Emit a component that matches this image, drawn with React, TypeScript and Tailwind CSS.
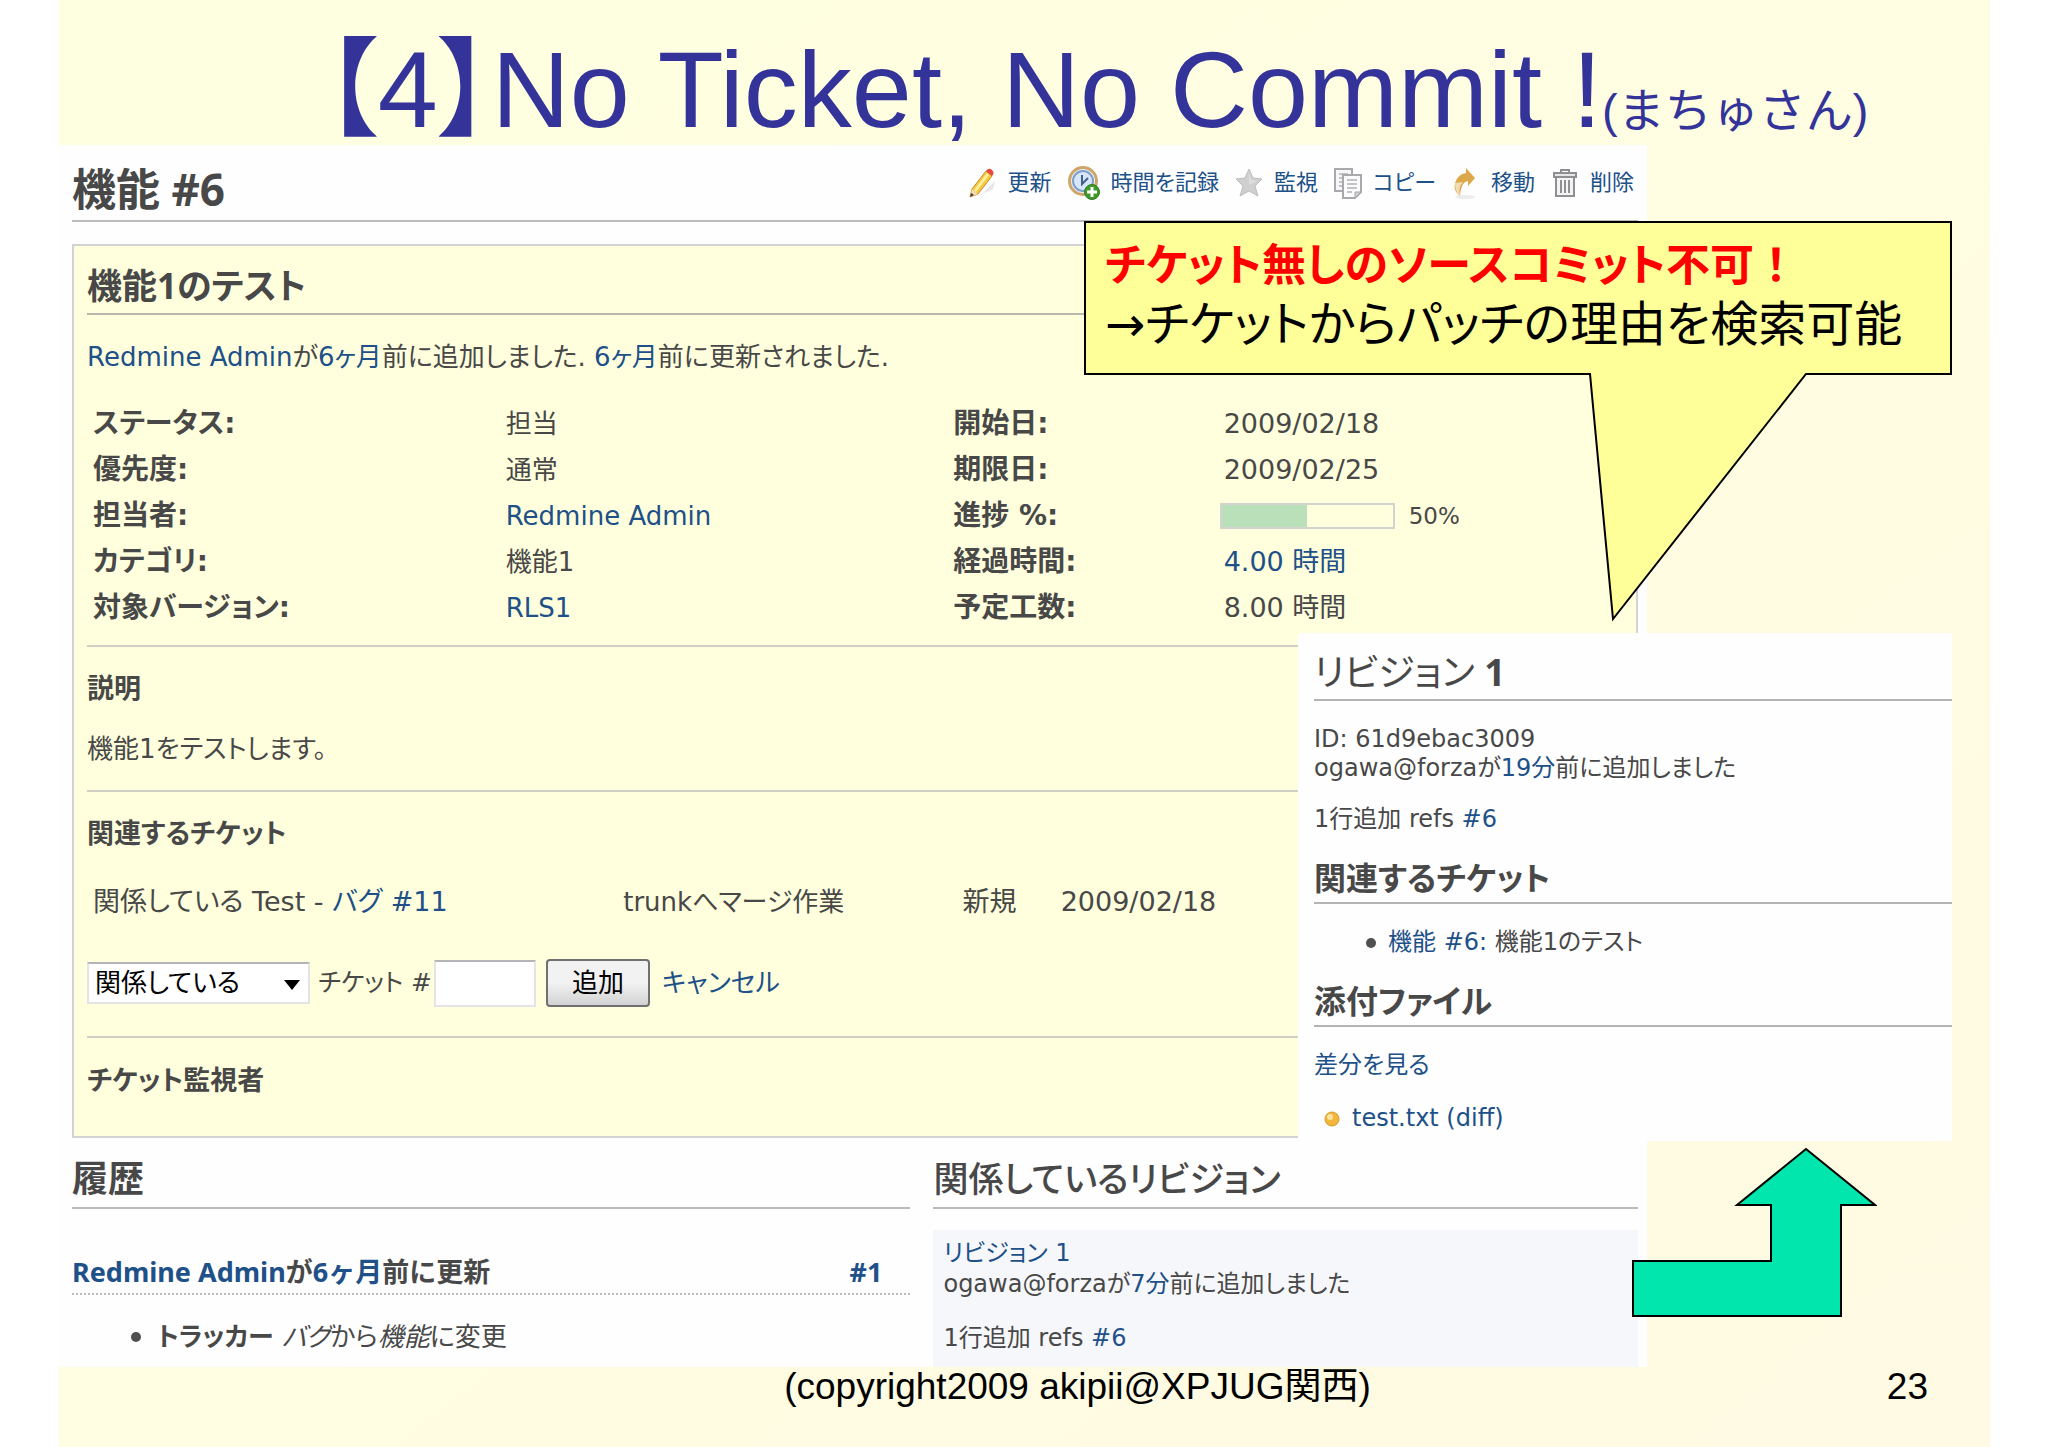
import { useState } from "react";
import type { ReactNode } from "react";

type LinkProps = {
    children: ReactNode;
}

const Link = ({ children }: LinkProps) => {
    return <a href="#" className="text-[#205088]">{children}</a>;
};

const PencilIcon = () => (
    <svg className="w-7 h-8 shrink-0" viewBox="0 0 28 32">
        <path d="M6 30 L24 22 L26 14 L12 28 Z" fill="#e6e6e6" />
        <path d="M1 30 L3 22 L17 4 L23 9 L9 27 Z" fill="#f7c93c" stroke="#d08a2a" strokeWidth="1" />
        <path d="M5 23 L18 6 L20 8 L7 25 Z" fill="#fdf0a0" />
        <path d="M17 4 Q20 0 23 3 Q26 6 23 9 Z" fill="#e8483c" />
        <path d="M1 30 L3 22 L9 27 Z" fill="#f1d9b0" />
        <path d="M1 30 L2 26 L5 28 Z" fill="#4a3a2a" />
    </svg>
);

const ClockIcon = () => (
    <svg className="w-8 h-9 shrink-0" viewBox="0 0 32 36">
        <circle cx="15" cy="16" r="13.5" fill="#e9eef6" stroke="#cfa66a" strokeWidth="3" />
        <circle cx="15" cy="16" r="10" fill="#d7e6f8" stroke="#7f9fcb" strokeWidth="2" />
        <path d="M14 10 V19 L20 13" fill="none" stroke="#3f5f8c" strokeWidth="2" />
        <circle cx="24" cy="27" r="7.5" fill="#3f9a2c" stroke="#2d7a1f" strokeWidth="1" />
        <path d="M24 22 V32 M19 27 H29" stroke="#fff" strokeWidth="3" />
    </svg>
);

const StarIcon = () => (
    <svg className="w-7 h-8 shrink-0" viewBox="0 0 28 32">
        <path d="M14 2 L18 11 L27 12 L20 19 L23 29 L14 24 L5 29 L8 19 L1 12 L10 11 Z" fill="#cfcfcf" stroke="#bdbdbd" strokeWidth="1" />
        <path d="M14 6 L16 13 L22 14 L14 18 Z" fill="#dedede" />
    </svg>
);

const CopyIcon = () => (
    <svg className="w-7 h-8 shrink-0" viewBox="0 0 28 32">
        <path d="M1 2 H18 V24 H1 Z" fill="#f7f7f7" stroke="#a9a9ad" strokeWidth="2" />
        <path d="M5 7 H14 M5 11 H8 M5 15 H8 M5 19 H8" stroke="#c3c3c7" strokeWidth="2" />
        <path d="M9 8 H27 V25 L21 31 H9 Z" fill="#fbfbfb" stroke="#a9a9ad" strokeWidth="2" />
        <path d="M13 13 H23 M13 17 H23 M13 21 H23 M13 25 H18" stroke="#c3c3c7" strokeWidth="2" />
        <path d="M27 25 H21 V31 Z" fill="#d0d0d4" stroke="#a9a9ad" strokeWidth="1" />
    </svg>
);

const MoveIcon = () => (
    <svg className="w-7 h-8 shrink-0" viewBox="0 0 28 32">
        <ellipse cx="13" cy="30" rx="10" ry="2" fill="#ececec" />
        <path d="M14 1 L23 11 L16 19 V14 Q9 15 8 29 Q1 24 3 16 Q6 7 14 6 Z" fill="#dda84a" />
        <path d="M3 16 Q3 25 8 29 Q6 20 11 15 Z" fill="#f0dcb0" />
    </svg>
);

const TrashIcon = () => (
    <svg className="w-7 h-8 shrink-0" viewBox="0 0 28 32" fill="none" stroke="#8f8f93" strokeWidth="2">
        <path d="M10 6 V3 H18 V6" />
        <path d="M3 6 H25 V10 H3 Z" fill="#e6e6e8" />
        <path d="M5 11 V29 H23 V11" fill="#f4f4f5" />
        <path d="M10 13 V26 M14 13 V26 M18 13 V26" />
    </svg>
);

const actions = [
    { label: '更新', icon: <PencilIcon /> },
    { label: '時間を記録', icon: <ClockIcon /> },
    { label: '監視', icon: <StarIcon /> },
    { label: 'コピー', icon: <CopyIcon /> },
    { label: '移動', icon: <MoveIcon /> },
    { label: '削除', icon: <TrashIcon /> },
];

const DoneRatio = ({ value }: { value: number }) => (
    <div className="flex items-center">
        <div className="-ml-1 w-[175px] h-[26px] border-2 border-[#d3d3d0]">
            <div className="h-full bg-[#bae0ba]" style={{ width: `${value}%` }}></div>
        </div>
        <span className="ml-3.5 text-[23px]">{value}%</span>
    </div>
);

const attributes: { label: string; value: ReactNode; label2: string; value2: ReactNode }[] = [
    { label: 'ステータス:', value: '担当', label2: '開始日:', value2: '2009/02/18' },
    { label: '優先度:', value: '通常', label2: '期限日:', value2: '2009/02/25' },
    { label: '担当者:', value: <Link>Redmine Admin</Link>, label2: '進捗 %:', value2: <DoneRatio value={50} /> },
    { label: 'カテゴリ:', value: '機能1', label2: '経過時間:', value2: <Link>4.00 時間</Link> },
    { label: '対象バージョン:', value: <Link>RLS1</Link>, label2: '予定工数:', value2: '8.00 時間' },
];

const RelationForm = () => {
    const [relation, setRelation] = useState('relates');
    const [ticket, setTicket] = useState('');

    return (
        <form className="mt-[39px] flex h-12 items-center" onSubmit={e => e.preventDefault()}>
            <div className="relative">
                <select aria-label="関係" className="block w-[223px] h-[42px] appearance-none border-2 border-[#e3e3e8] border-t-[#b4b4b8] bg-white pl-1.5 text-black" value={relation} onChange={e => setRelation(e.target.value)}>
                    <option value="relates">関係している</option>
                </select>
                <svg className="absolute right-2.5 top-[18px] w-4 h-2.5 pointer-events-none" viewBox="0 0 16 10">
                    <path d="M0 0 H16 L8 10 Z" fill="#000" />
                </svg>
            </div>
            <label className="ml-2 w-[116px] text-[25px] whitespace-nowrap" htmlFor="ticket">チケット #</label>
            <input id="ticket" type="text" className="w-[102px] h-[47px] border-2 border-[#e3e3e8] border-t-[#b4b4b8] bg-white px-2" value={ticket} onChange={e => setTicket(e.target.value)} />
            <button type="submit" className="ml-2.5 w-[104px] h-12 rounded border-2 border-[#707070] bg-linear-to-b from-[#f2f2f2] from-50% to-[#d2d2d2] text-black">追加</button>
            <span className="ml-3"><Link>キャンセル</Link></span>
        </form>
    );
};

const Issue = () => (
    <section className="mt-[22px] border-2 border-[#d3d3d3] bg-[#ffffdd] px-[13px] pb-[37px]">
        <h3 className="pt-[13px] border-b-2 border-[#b8b8ac] font-['Noto_Sans','Noto_Sans_CJK_JP',sans-serif] text-[35px] leading-[54px] font-bold">機能1のテスト</h3>
        <p className="mt-6 leading-9">
            <Link>Redmine Admin</Link>が<Link>6ヶ月</Link>前に追加しました. <Link>6ヶ月</Link>前に更新されました.
        </p>
        <table className="mt-[26px] w-full table-fixed text-left leading-9">
            <colgroup>
                <col className="w-[27%]" />
                <col className="w-[29%]" />
                <col className="w-[18%]" />
                <col className="w-[26%]" />
            </colgroup>
            <tbody>
                {attributes.map((row) => (
                    <tr key={row.label} className="h-[46px]">
                        <th className="p-0 pl-1.5 text-[28px] font-bold">{row.label}</th>
                        <td className="p-0 pl-1">{row.value}</td>
                        <th className="p-0 pl-1.5 text-[28px] font-bold">{row.label2}</th>
                        <td className="p-0 text-[27px]">{row.value2}</td>
                    </tr>
                ))}
            </tbody>
        </table>
        <hr className="mt-3.5 border-0 border-t-2 border-[#cfcfc4]" />
        <h4 className="mt-6 text-[27px] leading-9 font-bold">説明</h4>
        <p className="mt-6 leading-9">機能1をテストします。</p>
        <hr className="mt-[23px] border-0 border-t-2 border-[#cfcfc4]" />
        <h4 className="mt-6 text-[27px] leading-9 font-bold">関連するチケット</h4>
        <table className="mt-8 w-full table-fixed text-[27px] leading-9">
            <colgroup>
                <col className="w-[34%]" />
                <col className="w-[23%]" />
                <col className="w-[6%]" />
                <col />
            </colgroup>
            <tbody>
                <tr className="h-9">
                    <td className="p-0 pl-1.5 whitespace-nowrap">関係している Test - <Link>バグ #11</Link></td>
                    <td className="p-0 pl-3.5 text-[26px]">trunkへマージ作業</td>
                    <td className="p-0 whitespace-nowrap">新規</td>
                    <td className="p-0 pl-1.5">2009/02/18</td>
                </tr>
            </tbody>
        </table>
        <RelationForm />
        <hr className="mt-[29px] border-0 border-t-2 border-[#cfcfc4]" />
        <h4 className="mt-[25px] text-[27px] leading-9 font-bold">チケット監視者</h4>
    </section>
);

const History = () => (
    <section>
        <h3 className="pt-[22px] pb-[7px] border-b-2 border-[#bbbbbb] text-4xl leading-10 font-bold">履歴</h3>
        <h4 className="mt-[45px] flex justify-between border-b-2 border-dotted border-[#bbbbbb] pb-[3px] pr-7 font-['Noto_Sans','Noto_Sans_CJK_JP',sans-serif] [font-feature-settings:normal] text-[27px] leading-9 font-bold">
            <span><Link>Redmine Admin</Link>が<Link>6ヶ月</Link>前に更新</span>
            <Link>#1</Link>
        </h4>
        <ul className="mt-6 pb-3 leading-9">
            <li className="flex items-center pl-[59px]">
                <span className="mr-4 size-2.5 rounded-full bg-[#505050]"></span>
                <span><strong>トラッカー</strong> <i>バグ</i>から<i>機能</i>に変更</span>
            </li>
        </ul>
    </section>
);

const Changesets = () => (
    <section>
        <h3 className="pt-[22px] pb-[7px] border-b-2 border-[#bbbbbb] text-[35px] leading-10 font-medium whitespace-nowrap">関係しているリビジョン</h3>
        <div className="mt-[21px] bg-[#f6f7fa] px-2.5 pt-2 pb-3.5 text-2xl leading-[31px]">
            <p><Link>リビジョン 1</Link></p>
            <p>ogawa@forzaが<Link>7分</Link>前に追加しました</p>
            <p className="mt-[23px] leading-[30px]">1行追加 refs <Link>#6</Link></p>
        </div>
    </section>
);

const Revision = () => (
    <aside className="absolute right-[38px] top-[633px] w-[654px] h-[508px] bg-[#fefefe] pl-4 text-2xl leading-[29px]">
        <h2 className="pt-[18px] pb-1.5 border-b-2 border-[#b4b4b4] font-['Noto_Sans','Noto_Sans_CJK_JP',sans-serif] text-[37px] leading-[42px] font-normal">リビジョン <b>1</b></h2>
        <p className="mt-6">ID: 61d9ebac3009</p>
        <p>ogawa@forzaが<Link>19分</Link>前に追加しました</p>
        <p className="mt-[22px]">1行追加 refs <Link>#6</Link></p>
        <h3 className="mt-6 pb-0.5 border-b-2 border-[#b4b4b4] text-[32px] leading-[42px] font-bold">関連するチケット</h3>
        <ul className="mt-6">
            <li className="flex items-center pl-[52px]">
                <span className="mr-3 size-2.5 rounded-full bg-[#505050]"></span>
                <span><Link>機能 #6:</Link> 機能1のテスト</span>
            </li>
        </ul>
        <h3 className="mt-6 pb-0.5 border-b-2 border-[#b4b4b4] text-[32px] leading-[42px] font-bold">添付ファイル</h3>
        <p className="mt-6"><Link>差分を見る</Link></p>
        <p className="mt-6 flex items-center pl-2.5">
            <svg className="mr-3 w-4 h-4" viewBox="0 0 16 16">
                <circle cx="8" cy="8" r="7" fill="#f3b53a" stroke="#d79a2c" strokeWidth="1" />
                <circle cx="6" cy="6" r="3" fill="#fde3a0" />
            </svg>
            <Link>test.txt (diff)</Link>
        </p>
    </aside>
);

const Callout = () => (
    <div className="absolute right-[37px] top-[220px] w-[870px] h-[402px]">
        <svg className="absolute inset-0 w-full h-full" viewBox="0 0 870 402">
            <path d="M2 2 H868 V154 H723 L530 399 L507 154 H2 Z" fill="#ffff99" stroke="#000" strokeWidth="2" />
        </svg>
        <div className="relative pl-[22px] pt-[17px] leading-[58px] whitespace-nowrap">
            <p className="text-[44px] font-bold text-[#ff0000]">チケット無しのソースコミット不可<span className="[font-feature-settings:normal]">！</span></p>
            <p className="text-5xl leading-[58px] text-black">→チケットからパッチの理由を検索可能</p>
        </div>
    </div>
);

const App = () => {
    return (
        <div className="min-h-screen bg-white pl-[59px] pr-[58px] font-['DejaVu_Sans','Noto_Sans_CJK_JP',sans-serif] [font-feature-settings:'palt'] text-[26px] text-[#484848]" lang="ja">
            <div className="relative min-h-screen bg-linear-to-br from-[#feffe0] to-[#fffae3]">
                <h1 className="h-[145px] pt-6 pl-[143px] text-center font-['Liberation_Sans','Noto_Sans_CJK_JP',sans-serif] text-[108px] leading-[132px] text-[#333399] whitespace-nowrap">
                    【4】No Ticket, No Commit !<span className="[font-feature-settings:normal] text-[47px]">(まちゅさん)</span>
                </h1>
                <main className="mr-[343px] bg-[#fefefe] pl-[13px] pr-[9px]">
                    <header className="flex h-[77px] items-center justify-between border-b-2 border-[#bbbbbb]">
                        <h2 className="pt-3 font-['Noto_Sans','Noto_Sans_CJK_JP',sans-serif] text-[44px] leading-[60px] font-bold">機能 #6</h2>
                        <nav className="flex gap-4 pr-1 text-[22px]">
                            {actions.map((action) => (
                                <a key={action.label} href="#" className="flex items-center gap-[11px] text-[#205088]">
                                    {action.icon}
                                    {action.label}
                                </a>
                            ))}
                        </nav>
                    </header>
                    <Issue />
                    <div className="grid grid-cols-[839fr_705fr] gap-[23px]">
                        <History />
                        <Changesets />
                    </div>
                </main>
                <Revision />
                <Callout />
                <svg className="absolute right-[113px] top-[1147px] w-[246px] h-[171px]" viewBox="0 0 246 171">
                    <path d="M2 114 H140 V58 H106 L175 2 L244 58 H210 V169 H2 Z" fill="#00e6ac" stroke="#000" strokeWidth="2" />
                </svg>
                <footer className="grid grid-cols-[1fr_auto_1fr] pl-[168px] pr-[62px] font-['Liberation_Sans','Noto_Sans_CJK_JP',sans-serif] [font-feature-settings:normal] text-[37px] leading-10 text-black">
                    <span className="col-start-2">(copyright2009 akipii@XPJUG関西)</span>
                    <span className="text-right">23</span>
                </footer>
            </div>
        </div>
    );
};

export default App;
